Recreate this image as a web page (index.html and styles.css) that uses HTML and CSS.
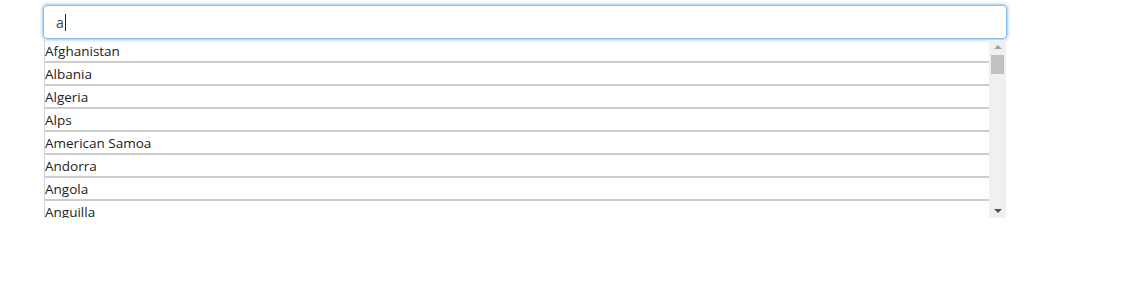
FILE: index.html
```html
<!DOCTYPE html>
<html lang="en">

<head>
    <meta charset="UTF-8">
    <meta name="viewport" content="width=device-width, initial-scale=1.0">
    <title>Autocomplete</title>
    <link rel="stylesheet" href="styles.css">
</head>

<body>
    <div id="search">
        <div class="field"><span class="value">a</span><span class="caret"></span></div>
        <div class="dropdown">
            <ul class="list">
                <li>Afghanistan</li>
                <li>Albania</li>
                <li>Algeria</li>
                <li>Alps</li>
                <li>American Samoa</li>
                <li>Andorra</li>
                <li>Angola</li>
                <li>Anguilla</li>
            </ul>
            <div class="scrollbar">
                <span class="arrow up"></span>
                <span class="thumb"></span>
                <span class="track"></span>
                <span class="arrow down"></span>
            </div>
        </div>
    </div>
</body>

</html>
```

FILE: styles.css
```css
* {
    margin: 0;
    padding: 0;
    box-sizing: border-box;
}

body {
    font-family: "Open Sans", "Noto Sans", sans-serif;
    font-size: 13.5px;
    color: #222;
    background: #fff;
}

#search {
    width: 964px;
    margin: 5px 0 0 43px;
}

.field {
    display: flex;
    align-items: center;
    height: 34px;
    padding: 0 12px;
    border: 1px solid #86bdec;
    border-radius: 4px;
    box-shadow: 0 0 3px 1px rgba(102, 175, 233, .7);
    font-size: 14px;
    color: #444;
}

.caret {
    width: 1px;
    height: 17px;
    margin-left: 1px;
    background: #222;
}

.dropdown {
    display: flex;
    width: 962px;
    height: 178px;
    margin: 1px 0 0 1px;
    overflow: hidden;
}

.list {
    flex: 1;
    list-style: none;
    border-left: 1px solid #d4d4d4;
}

.list li {
    height: 23px;
    line-height: 22px;
    border-bottom: 2px solid #cdcdcd;
    white-space: nowrap;
}

.scrollbar {
    display: flex;
    flex-direction: column;
    align-items: center;
    width: 17px;
    background: #f0f0f0;
}

.arrow {
    width: 0;
    height: 0;
    margin: 5px 0;
    border-left: 4px solid transparent;
    border-right: 4px solid transparent;
}

.arrow.up {
    border-bottom: 4px solid #a3a3a3;
}

.arrow.down {
    border-top: 4px solid #505050;
}

.thumb {
    width: 13px;
    height: 19px;
    margin-top: 1px;
    background: #c1c1c1;
}

.track {
    flex: 1;
}
```
